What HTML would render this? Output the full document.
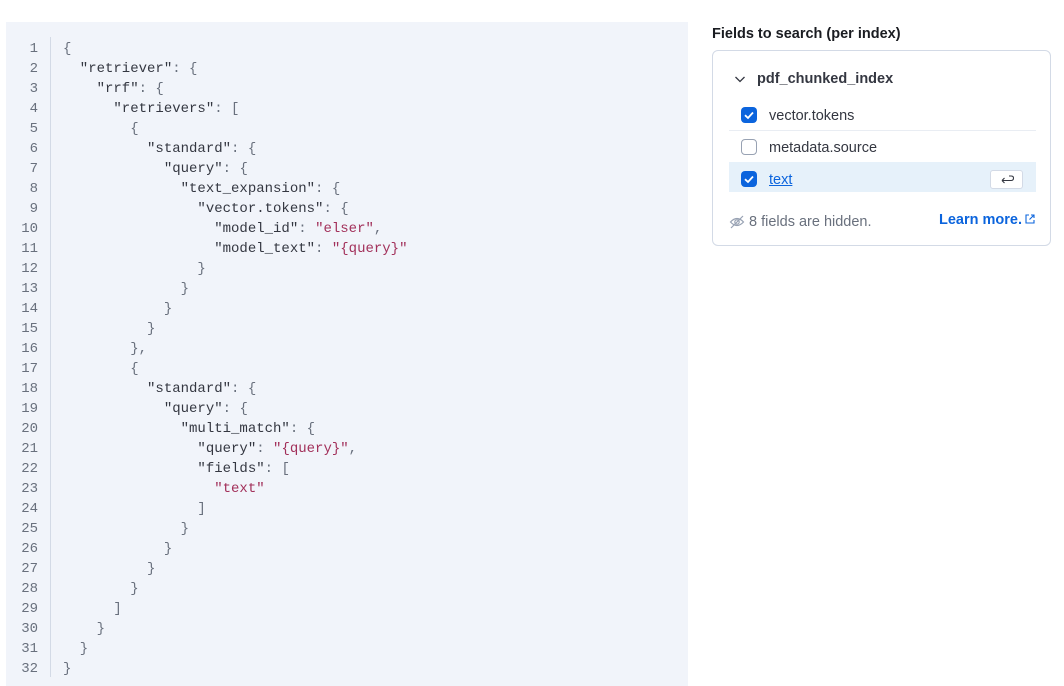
<!DOCTYPE html>
<html><head><meta charset="utf-8"><style>
body{margin:0;width:1064px;height:686px;background:#fff;overflow:hidden;position:relative;font-family:"Liberation Sans",sans-serif}
#code{position:absolute;left:6px;top:22px;width:682px;height:664px;background:#f1f4fa}
#sep{position:absolute;left:44px;top:15px;height:640px;border-left:1px solid #d3dae6}
.ln{position:absolute;left:0;width:32px;text-align:right;font:14px/20px "Liberation Mono",monospace;color:#69707d}
.cl{position:absolute;left:57px;white-space:pre;font:14px/20px "Liberation Mono",monospace;color:#343741}
.p{color:#69707d}.s{color:#a2305a}
.title{position:absolute;left:712px;top:26px;font-weight:bold;font-size:14.5px;color:#1a1c21}
#box{position:absolute;left:712px;top:50px;width:339px;height:196px;border:1px solid #d3dae6;border-radius:6px;box-sizing:border-box}
.cb{position:absolute;left:741px;width:16px;height:16px;border-radius:4px;box-sizing:border-box}
.on{background:#0b64dd}
.off{border:1px solid #98a2b3;background:#fff}
.lab{position:absolute;left:769px;font-size:14.5px;color:#343741}
</style></head><body>
<div id="code"><div id="sep"></div></div>
<div style="position:absolute;left:6px;top:39px">
<div class="ln" style="top:0">1</div><div class="ln" style="top:20px">2</div><div class="ln" style="top:40px">3</div><div class="ln" style="top:60px">4</div><div class="ln" style="top:80px">5</div><div class="ln" style="top:100px">6</div><div class="ln" style="top:120px">7</div><div class="ln" style="top:140px">8</div><div class="ln" style="top:160px">9</div><div class="ln" style="top:180px">10</div><div class="ln" style="top:200px">11</div><div class="ln" style="top:220px">12</div><div class="ln" style="top:240px">13</div><div class="ln" style="top:260px">14</div><div class="ln" style="top:280px">15</div><div class="ln" style="top:300px">16</div><div class="ln" style="top:320px">17</div><div class="ln" style="top:340px">18</div><div class="ln" style="top:360px">19</div><div class="ln" style="top:380px">20</div><div class="ln" style="top:400px">21</div><div class="ln" style="top:420px">22</div><div class="ln" style="top:440px">23</div><div class="ln" style="top:460px">24</div><div class="ln" style="top:480px">25</div><div class="ln" style="top:500px">26</div><div class="ln" style="top:520px">27</div><div class="ln" style="top:540px">28</div><div class="ln" style="top:560px">29</div><div class="ln" style="top:580px">30</div><div class="ln" style="top:600px">31</div><div class="ln" style="top:620px">32</div>
<div class="cl" style="top:0"><span class="p">{</span>
  "retriever"<span class="p">: {</span>
    "rrf"<span class="p">: {</span>
      "retrievers"<span class="p">: [</span>
<span class="p">        {</span>
          "standard"<span class="p">: {</span>
            "query"<span class="p">: {</span>
              "text_expansion"<span class="p">: {</span>
                "vector.tokens"<span class="p">: {</span>
                  "model_id"<span class="p">: </span><span class="s">"elser"</span><span class="p">,</span>
                  "model_text"<span class="p">: </span><span class="s">"{query}"</span>
<span class="p">                }
              }
            }
          }
        },
        {</span>
          "standard"<span class="p">: {</span>
            "query"<span class="p">: {</span>
              "multi_match"<span class="p">: {</span>
                "query"<span class="p">: </span><span class="s">"{query}"</span><span class="p">,</span>
                "fields"<span class="p">: [</span>
<span class="s">                  "text"</span>
<span class="p">                ]
              }
            }
          }
        }
      ]
    }
  }
}</span></div>
</div>

<div class="title">Fields to search (per index)</div>
<div id="box"></div>
<svg style="position:absolute;left:734px;top:74px" width="12" height="10" viewBox="0 0 12 10"><path d="M1.5 3 L6 7.5 L10.5 3" fill="none" stroke="#343741" stroke-width="1.3"/></svg>
<div style="position:absolute;left:757px;top:71px;font-weight:bold;font-size:14.5px;color:#343741">pdf_chunked_index</div>

<div class="cb on" style="top:107px"><svg width="16" height="16"><path d="M4 8.2 L7 11 L12 5.5" fill="none" stroke="#fff" stroke-width="1.8"/></svg></div>
<div class="lab" style="top:108px">vector.tokens</div>
<div style="position:absolute;left:729px;top:130px;width:307px;border-top:1px solid #e9edf3"></div>
<div class="cb off" style="top:139px"></div>
<div class="lab" style="top:140px">metadata.source</div>
<div style="position:absolute;left:729px;top:162px;width:307px;height:30px;background:#e6f1fa"></div>
<div class="cb on" style="top:171px"><svg width="16" height="16"><path d="M4 8.2 L7 11 L12 5.5" fill="none" stroke="#fff" stroke-width="1.8"/></svg></div>
<div class="lab" style="top:172px;color:#0b64dd;text-decoration:underline">text</div>
<div style="position:absolute;left:990px;top:170px;width:33px;height:19px;background:#fff;border:1px solid #d3dae6;border-radius:3px;box-sizing:border-box"><svg width="31" height="17" style="position:absolute;left:0;top:0"><path d="M11 9.5 H20 Q22.5 9.5 22.5 7 Q22.5 5 20 5 H18 M11 9.5 L13.5 7 M11 9.5 L13.5 12" fill="none" stroke="#343741" stroke-width="1.1"/></svg></div>

<svg style="position:absolute;left:729px;top:214px" width="16" height="16" viewBox="0 0 16 16"><path d="M1.5 8 Q8 1 14.5 8 Q8 15 1.5 8 Z M2 14 L14 2" fill="none" stroke="#98a2b3" stroke-width="1.2"/><circle cx="8" cy="8" r="2.2" fill="none" stroke="#98a2b3" stroke-width="1.2"/></svg>
<div style="position:absolute;left:749px;top:214px;font-size:14.5px;color:#69707d">8 fields are hidden.</div>
<div style="position:absolute;left:939px;top:212px;font-size:14.5px;font-weight:bold;color:#0b64dd">Learn more.</div>
<svg style="position:absolute;left:1024px;top:213px" width="12" height="12" viewBox="0 0 12 12"><path d="M5 2 H2 V10 H10 V7 M7 2 H10 V5 M10 2 L5.5 6.5" fill="none" stroke="#0b64dd" stroke-width="1.1"/></svg>
</body></html>
